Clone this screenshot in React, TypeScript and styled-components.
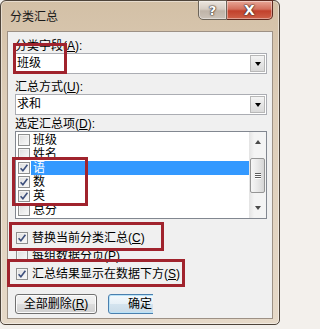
import React from 'react';
import styled, { createGlobalStyle } from 'styled-components';

const GlobalStyle = createGlobalStyle`
  html, body {
    margin: 0;
    padding: 0;
    background: #f3f0ec;
  }
  body {
    font-family: "Liberation Sans", "Noto Sans CJK SC", sans-serif;
    font-size: 12px;
    color: #000;
  }
`;

const Window = styled.div`
  position: relative;
  width: 280px;
  height: 325px;
  box-sizing: border-box;
  border: 1px solid #4e443a;
  border-radius: 6px 6px 5px 5px;
  background: linear-gradient(180deg, #d3c0a6 0%, #ddcdb8 30%, #e6d9c8 100%);
  box-shadow: inset 0 0 0 1px rgba(255, 255, 255, 0.45);
  display: flex;
  flex-direction: column;
  padding: 0 6px 5px 6px;
`;

const TitleBar = styled.div`
  height: 30px;
  display: flex;
  align-items: flex-start;
  justify-content: space-between;
`;

const Title = styled.div`
  padding: 9px 0 0 3px;
  line-height: 15px;
  font-size: 12px;
  color: #1a1a1a;
`;

const CaptionGroup = styled.div`
  display: flex;
  margin-top: -1px;
  margin-right: 0;
`;

const CaptionButton = styled.div<{ $close?: boolean }>`
  width: ${(p) => (p.$close ? 46 : 29)}px;
  height: 20px;
  box-sizing: border-box;
  border: 1px solid ${(p) => (p.$close ? '#5e2a20' : '#6c6459')};
  border-left-width: ${(p) => (p.$close ? 0 : 1)}px;
  border-radius: ${(p) => (p.$close ? '0 0 5px 0' : '0 0 0 5px')};
  background: ${(p) =>
    p.$close
      ? 'linear-gradient(180deg, #e8a797 0%, #d3705e 45%, #c2412c 55%, #cf6148 100%)'
      : 'linear-gradient(180deg, #ece6df 0%, #d6cdc3 45%, #bfb4a8 55%, #cbc2b8 100%)'};
  box-shadow: inset 0 0 0 1px rgba(255, 255, 255, 0.4);
  display: flex;
  align-items: center;
  justify-content: center;
  color: #fff;
  font-weight: bold;
  font-size: ${(p) => (p.$close ? 14 : 13)}px;
  font-family: "DejaVu Sans", sans-serif;
  text-shadow: 0 0 1px #3a2c25, 0 0 1px #3a2c25, 0 0 2px #3a2c25;
  line-height: 1;
`;

const Panel = styled.div`
  flex: 1;
  border: 1px solid #9d9185;
  background: #f0f0f0;
  padding: 7px 5px 0 7px;
  display: flex;
  flex-direction: column;
`;

const Label = styled.div<{ $gap?: number }>`
  height: 14px;
  line-height: 14px;
  margin-top: ${(p) => p.$gap ?? 0}px;
  white-space: nowrap;
`;

const Combo = styled.div`
  height: 21px;
  box-sizing: border-box;
  border: 1px solid #abadb3;
  background: #fff;
  display: flex;
  align-items: center;
`;

const ComboValue = styled.div`
  flex: 1;
  padding-left: 1px;
  line-height: 19px;
`;

const ComboButton = styled.div`
  width: 15px;
  height: 17px;
  margin-right: 1px;
  box-sizing: border-box;
  border: 1px solid #b8b8b8;
  background: linear-gradient(180deg, #f4f4f4 0%, #e6e6e6 50%, #dadada 100%);
  display: flex;
  align-items: center;
  justify-content: center;
  &::after {
    content: '';
    border-left: 3.5px solid transparent;
    border-right: 3.5px solid transparent;
    border-top: 4px solid #000;
  }
`;

const ListBox = styled.div`
  height: 88px;
  box-sizing: border-box;
  border: 1px solid #828790;
  background: #fff;
  display: flex;
`;

const ListItems = styled.div`
  flex: 1;
  padding-top: 1px;
`;

const ListRow = styled.div`
  height: 14px;
  display: flex;
  align-items: center;
`;

const ListText = styled.div<{ $selected?: boolean }>`
  flex: 1;
  height: 14px;
  line-height: 14px;
  margin-left: 1px;
  padding-left: 2px;
  background: ${(p) => (p.$selected ? '#3399ff' : 'transparent')};
  color: ${(p) => (p.$selected ? '#fff' : '#000')};
`;

const Box = styled.span<{ $gap?: number }>`
  width: 12px;
  height: 12px;
  flex: none;
  box-sizing: border-box;
  margin-left: ${(p) => p.$gap ?? 2}px;
  border: 1px solid #8e8f8f;
  background: linear-gradient(135deg, #dcdcdc 0%, #ececec 50%, #fbfbfb 100%);
  box-shadow: inset 0 0 0 1px #f4f4f4;
  display: flex;
  align-items: center;
  justify-content: center;
`;

const ScrollBar = styled.div`
  width: 17px;
  display: flex;
  flex-direction: column;
  background: linear-gradient(90deg, #e3e3e3 0%, #f4f4f4 30%, #f4f4f4 100%);
`;

const ScrollArrow = styled.div<{ $down?: boolean }>`
  height: 20px;
  display: flex;
  align-items: center;
  justify-content: center;
  &::after {
    content: '';
    border-left: 3.5px solid transparent;
    border-right: 3.5px solid transparent;
    ${(p) => (p.$down ? 'border-top' : 'border-bottom')}: 4px solid #4a4a4a;
  }
`;

const ScrollTrack = styled.div`
  flex: 1;
  padding-top: 6px;
`;

const Thumb = styled.div`
  height: 35px;
  margin: 0 1px;
  box-sizing: border-box;
  border: 1px solid #959595;
  border-radius: 2px;
  background: linear-gradient(90deg, #f6f6f6 0%, #e8e8e8 50%, #d6d6d6 100%);
  display: flex;
  flex-direction: column;
  align-items: center;
  justify-content: center;
  gap: 1px;
`;

const Grip = styled.div`
  width: 6px;
  height: 1px;
  background: #5c5c5c;
  box-shadow: 0 1px 0 #fff;
`;

const OptionRows = styled.div`
  margin-top: 10px;
`;

const OptionRow = styled.div`
  height: 18px;
  display: flex;
  align-items: center;
  white-space: nowrap;
  overflow: hidden;
`;

const OptionText = styled.span`
  margin-left: 4px;
  line-height: 14px;
`;

const ButtonRow = styled.div`
  margin-top: 11px;
  display: flex;
  gap: 11px;
`;

const Button = styled.div<{ $primary?: boolean; $w: number }>`
  width: ${(p) => p.$w}px;
  height: 20px;
  flex: none;
  box-sizing: border-box;
  border: 1px solid ${(p) => (p.$primary ? '#4a7fae' : '#707070')};
  border-radius: 3px;
  background: ${(p) =>
    p.$primary
      ? 'linear-gradient(180deg, #f4f9fc 0%, #e6f0f7 50%, #d4e4ef 51%, #c9dbe8 100%)'
      : 'linear-gradient(180deg, #f2f2f2 0%, #ebebeb 50%, #dddddd 51%, #cfcfcf 100%)'};
  box-shadow: inset 0 0 0 1px ${(p) => (p.$primary ? '#b9e3f8' : '#fbfbfb')};
  display: flex;
  align-items: center;
  justify-content: center;
  line-height: 14px;
  white-space: nowrap;
`;

const ButtonClip = styled.div`
  width: 45px;
  overflow: hidden;
  flex: none;
`;

const Mark = styled.div<{ $x: number; $y: number; $w: number; $h: number }>`
  position: absolute;
  left: ${(p) => p.$x}px;
  top: ${(p) => p.$y}px;
  width: ${(p) => p.$w}px;
  height: ${(p) => p.$h}px;
  box-sizing: border-box;
  border: 3px solid #a0232d;
  pointer-events: none;
`;

const Check: React.FC<{ checked?: boolean; gap?: number }> = ({ checked, gap }) => (
  <Box $gap={gap}>
    {checked && (
      <svg width="10" height="10" viewBox="0 0 10 10">
        <path d="M1.6 5.2 L3.9 7.8 L8.4 1.8" fill="none" stroke="#3d4f7c" strokeWidth="1.6" />
      </svg>
    )}
  </Box>
);

const items = [
  { name: '班级', checked: false },
  { name: '姓名', checked: false },
  { name: '语', checked: true, selected: true },
  { name: '数', checked: true },
  { name: '英', checked: true },
  { name: '总分', checked: false },
];

const App: React.FC = () => {
  return (
    <>
      <GlobalStyle />
      <Window>
        <TitleBar>
          <Title>分类汇总</Title>
          <CaptionGroup>
            <CaptionButton>?</CaptionButton>
            <CaptionButton $close>X</CaptionButton>
          </CaptionGroup>
        </TitleBar>
        <Panel>
          <Label>
            分类字段(<u>A</u>):
          </Label>
          <Combo>
            <ComboValue>班级</ComboValue>
            <ComboButton />
          </Combo>
          <Label $gap={6}>
            汇总方式(<u>U</u>):
          </Label>
          <Combo>
            <ComboValue>求和</ComboValue>
            <ComboButton />
          </Combo>
          <Label $gap={2}>
            选定汇总项(<u>D</u>):
          </Label>
          <ListBox>
            <ListItems>
              {items.map((it) => (
                <ListRow key={it.name}>
                  <Check checked={it.checked} />
                  <ListText $selected={it.selected}>{it.name}</ListText>
                </ListRow>
              ))}
            </ListItems>
            <ScrollBar>
              <ScrollArrow />
              <ScrollTrack>
                <Thumb>
                  <Grip />
                  <Grip />
                  <Grip />
                </Thumb>
              </ScrollTrack>
              <ScrollArrow $down />
            </ScrollBar>
          </ListBox>
          <OptionRows>
            <OptionRow>
              <Check checked gap={1} />
              <OptionText>
                替换当前分类汇总(<u>C</u>)
              </OptionText>
            </OptionRow>
            <OptionRow>
              <Check gap={1} />
              <OptionText>
                每组数据分页(<u>P</u>)
              </OptionText>
            </OptionRow>
            <OptionRow>
              <Check checked gap={1} />
              <OptionText>
                汇总结果显示在数据下方(<u>S</u>)
              </OptionText>
            </OptionRow>
          </OptionRows>
          <ButtonRow>
            <Button $w={82}>
              全部删除(<u>R</u>)
            </Button>
            <ButtonClip>
              <Button $w={64} $primary>
                确定
              </Button>
            </ButtonClip>
          </ButtonRow>
        </Panel>
        <Mark $x={12} $y={42} $w={54} $h={31} />
        <Mark $x={11} $y={156} $w={76} $h={49} />
        <Mark $x={8} $y={221} $w={155} $h={29} />
        <Mark $x={6} $y={258} $w={178} $h={28} />
      </Window>
    </>
  );
};

export default App;
